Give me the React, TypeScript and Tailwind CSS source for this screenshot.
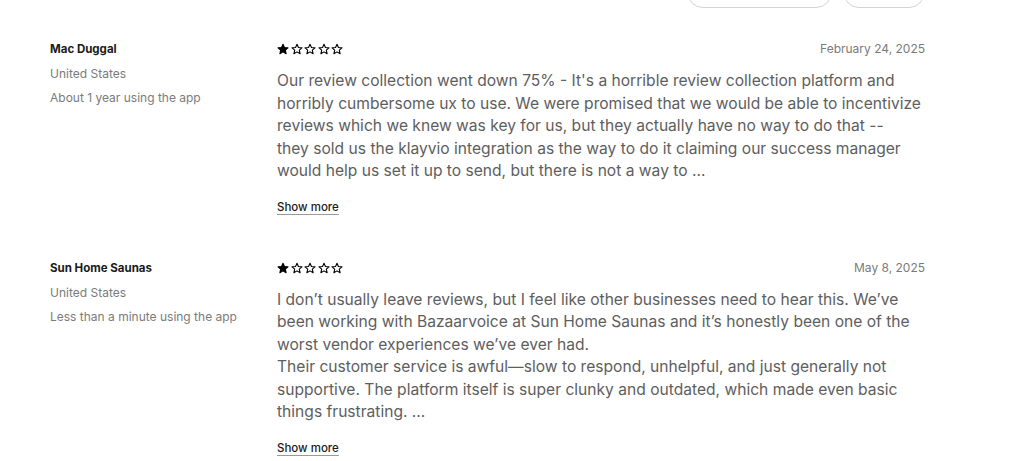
import React from "react";

function Star({ filled }: { filled: boolean }) {
  return (
    <svg width="12" height="12" viewBox="0 0 24 24" className="shrink-0">
      <path
        d="M12 2.5l2.9 6.6 7.1.6-5.4 4.7 1.6 7-6.2-3.7-6.2 3.7 1.6-7L2 9.7l7.1-.6L12 2.5z"
        fill={filled ? "#000" : "none"}
        stroke="#000"
        strokeWidth="2.2"
        strokeLinejoin="round"
      />
    </svg>
  );
}

function Stars({ n }: { n: number }) {
  return (
    <div className="flex items-center gap-[1.5px]">
      {[0, 1, 2, 3, 4].map((i) => (
        <Star key={i} filled={i < n} />
      ))}
    </div>
  );
}

type Review = {
  name: string;
  location: string;
  usage: string;
  date: string;
  body: React.ReactNode;
};

const reviews: Review[] = [
  {
    name: "Mac Duggal",
    location: "United States",
    usage: "About 1 year using the app",
    date: "February 24, 2025",
    body: (
      <p>
        Our review collection went down 75% - It's a horrible review collection platform and horribly
        cumbersome ux to use. We were promised that we would be able to incentivize reviews which we
        knew was key for us, but they actually have no way to do that --
        <br />
        they sold us the klayvio integration as the way to do it claiming our success manager would
        help us set it up to send, but there is not a way to …
      </p>
    ),
  },
  {
    name: "Sun Home Saunas",
    location: "United States",
    usage: "Less than a minute using the app",
    date: "May 8, 2025",
    body: (
      <>
        <p>
          I don’t usually leave reviews, but I feel like other businesses need to hear this. We’ve been
          working with Bazaarvoice at Sun Home Saunas and it’s honestly been one of the worst vendor
          experiences we’ve ever had.
        </p>
        <p>
          Their customer service is awful—slow to respond, unhelpful, and just generally not supportive.
          The platform itself is super clunky and outdated, which made even basic things frustrating. …
        </p>
      </>
    ),
  },
];

export default function App() {
  return (
    <div className="w-[1024px] h-[461px] overflow-hidden bg-white font-['Inter',sans-serif]">
      <div className="ml-[50px] w-[875px]">
        <div className="flex justify-end gap-[11px] -mt-[24px]">
          <div className="h-[32px] w-[145px] rounded-full border border-[#d4d4d4]" />
          <div className="h-[32px] w-[82px] rounded-full border border-[#d4d4d4]" />
        </div>
        <div className="mt-[33px] flex flex-col gap-[43px]">
          {reviews.map((r) => (
            <div key={r.name} className="flex">
              <div className="w-[227px] shrink-0 text-[12px] leading-[16px]">
                <div className="text-[11.5px] font-bold text-[#1a1a1a]">{r.name}</div>
                <div className="mt-[9px] text-[#7b7b7b]">{r.location}</div>
                <div className="mt-[8px] text-[#7b7b7b]">{r.usage}</div>
              </div>
              <div className="flex-1">
                <div className="flex items-center justify-between h-[16px]">
                  <Stars n={1} />
                  <div className="text-[12px] text-[#7b7b7b]">{r.date}</div>
                </div>
                <div className="mt-[13px] text-[15.6px] leading-[22.5px] text-[#5e5e5e]">{r.body}</div>
                <div className="mt-[10px]">
                  <span className="text-[11.5px] leading-[16px] font-medium text-[#1a1a1a] underline underline-offset-[3px] decoration-[#999]">
                    Show more
                  </span>
                </div>
              </div>
            </div>
          ))}
        </div>
      </div>
    </div>
  );
}
